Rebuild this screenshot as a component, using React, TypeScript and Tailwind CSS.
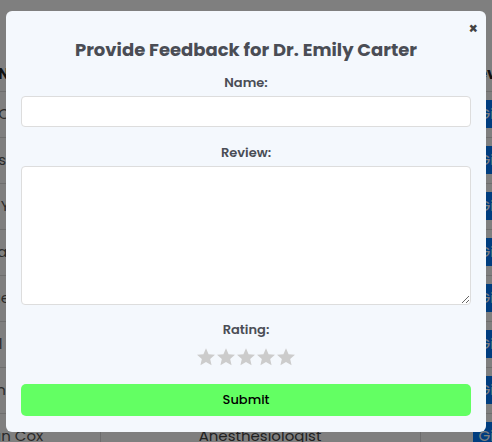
import { useState } from "react";

type Doctor = {
  name: string;
  specialization: string;
};

const doctors: Doctor[] = [
  { name: "Dr. Emily Carter", specialization: "Cardiologist" },
  { name: "Dr. James Smith", specialization: "Dermatologist" },
  { name: "Dr. Olivia Young", specialization: "Neurologist" },
  { name: "Dr. Sophia Garcia", specialization: "Pediatrician" },
  { name: "Dr. Michael Jae", specialization: "Orthopedic Surgeon" },
  { name: "Dr. Daniel Moore", specialization: "Psychiatrist" },
  { name: "Dr. Ava Thompson", specialization: "Oncologist" },
  { name: "Dr. Nathan Cox", specialization: "Anesthesiologist" },
];

function Star() {
  return (
    <svg viewBox="0 0 24 24" className="h-[20px] w-[20px] fill-[#cccccc]">
      <path d="M12 1.5l3.1 7.1 7.7.7-5.8 5.1 1.7 7.6L12 18l-6.7 4 1.7-7.6-5.8-5.1 7.7-.7z" />
    </svg>
  );
}

export default function App() {
  const [name, setName] = useState("");
  const [review, setReview] = useState("");

  return (
    <div className="relative h-[442px] w-[492px] overflow-hidden bg-white font-['Poppins','Inter',sans-serif] text-[#333]">
      {/* page behind the modal */}
      <div className="pt-[58px]">
        <table className="ml-[-80px] w-[650px] table-fixed border-collapse whitespace-nowrap text-[15px]">
          <thead>
            <tr className="h-[33px] border-b border-[#ddd] text-left font-semibold text-[#222]">
              <th className="w-[180px] pl-[78px]">Name</th>
              <th className="w-[320px] text-center">Specialization</th>
              <th className="pl-[48px]">Review</th>
            </tr>
          </thead>
          <tbody>
            {doctors.map((doc) => (
              <tr key={doc.name} className="h-[46px] border-b border-[#ddd]">
                <td className="overflow-hidden pl-[12px] text-[#555]">{doc.name}</td>
                <td className="border-x border-[#ddd] text-center text-[#444]">
                  {doc.specialization}
                </td>
                <td className="pl-[52px]">
                  <span className="inline-block rounded bg-[#007bff] px-[6px] py-[4px] leading-[20px] text-white">
                    Give Feedback
                  </span>
                </td>
              </tr>
            ))}
          </tbody>
        </table>
      </div>

      {/* overlay + modal */}
      <div className="fixed inset-0 flex items-start justify-center bg-black/50 pt-[11px]">
        <div className="relative flex w-[480px] flex-col rounded-[6px] bg-[#f4f8fd] px-[15px] pb-[16px] pt-[25px]">
          <button className="absolute right-[8px] top-[10px] text-[15px] font-bold leading-none text-[#444]">
            ×
          </button>
          <h2 className="text-center text-[18px] font-bold leading-[28px] text-[#4a4d55]">
            Provide Feedback for Dr. Emily Carter
          </h2>

          <label className="mt-[9px] text-center text-[13px] font-semibold leading-[20px] text-[#4a4d55]">
            Name:
          </label>
          <input
            value={name}
            onChange={(e) => setName(e.target.value)}
            className="mt-[3px] h-[31px] w-full rounded-[4px] border border-[#ddd] bg-white px-2 outline-none"
          />

          <label className="mt-[16px] text-center text-[13px] font-semibold leading-[20px] text-[#4a4d55]">
            Review:
          </label>
          <textarea
            value={review}
            onChange={(e) => setReview(e.target.value)}
            className="mt-[3px] block h-[139px] w-full rounded-[4px] border border-[#ddd] bg-white px-2 outline-none"
          />

          <label className="mt-[15px] text-center text-[13px] font-semibold leading-[20px] text-[#4a4d55]">
            Rating:
          </label>
          <div className="mt-[7px] flex justify-center gap-0">
            {[1, 2, 3, 4, 5].map((n) => (
              <Star key={n} />
            ))}
          </div>

          <button className="mt-[17px] h-[32px] w-full rounded-[5px] bg-[#63ff63] text-[13px] font-medium text-black">
            Submit
          </button>
        </div>
      </div>
    </div>
  );
}
